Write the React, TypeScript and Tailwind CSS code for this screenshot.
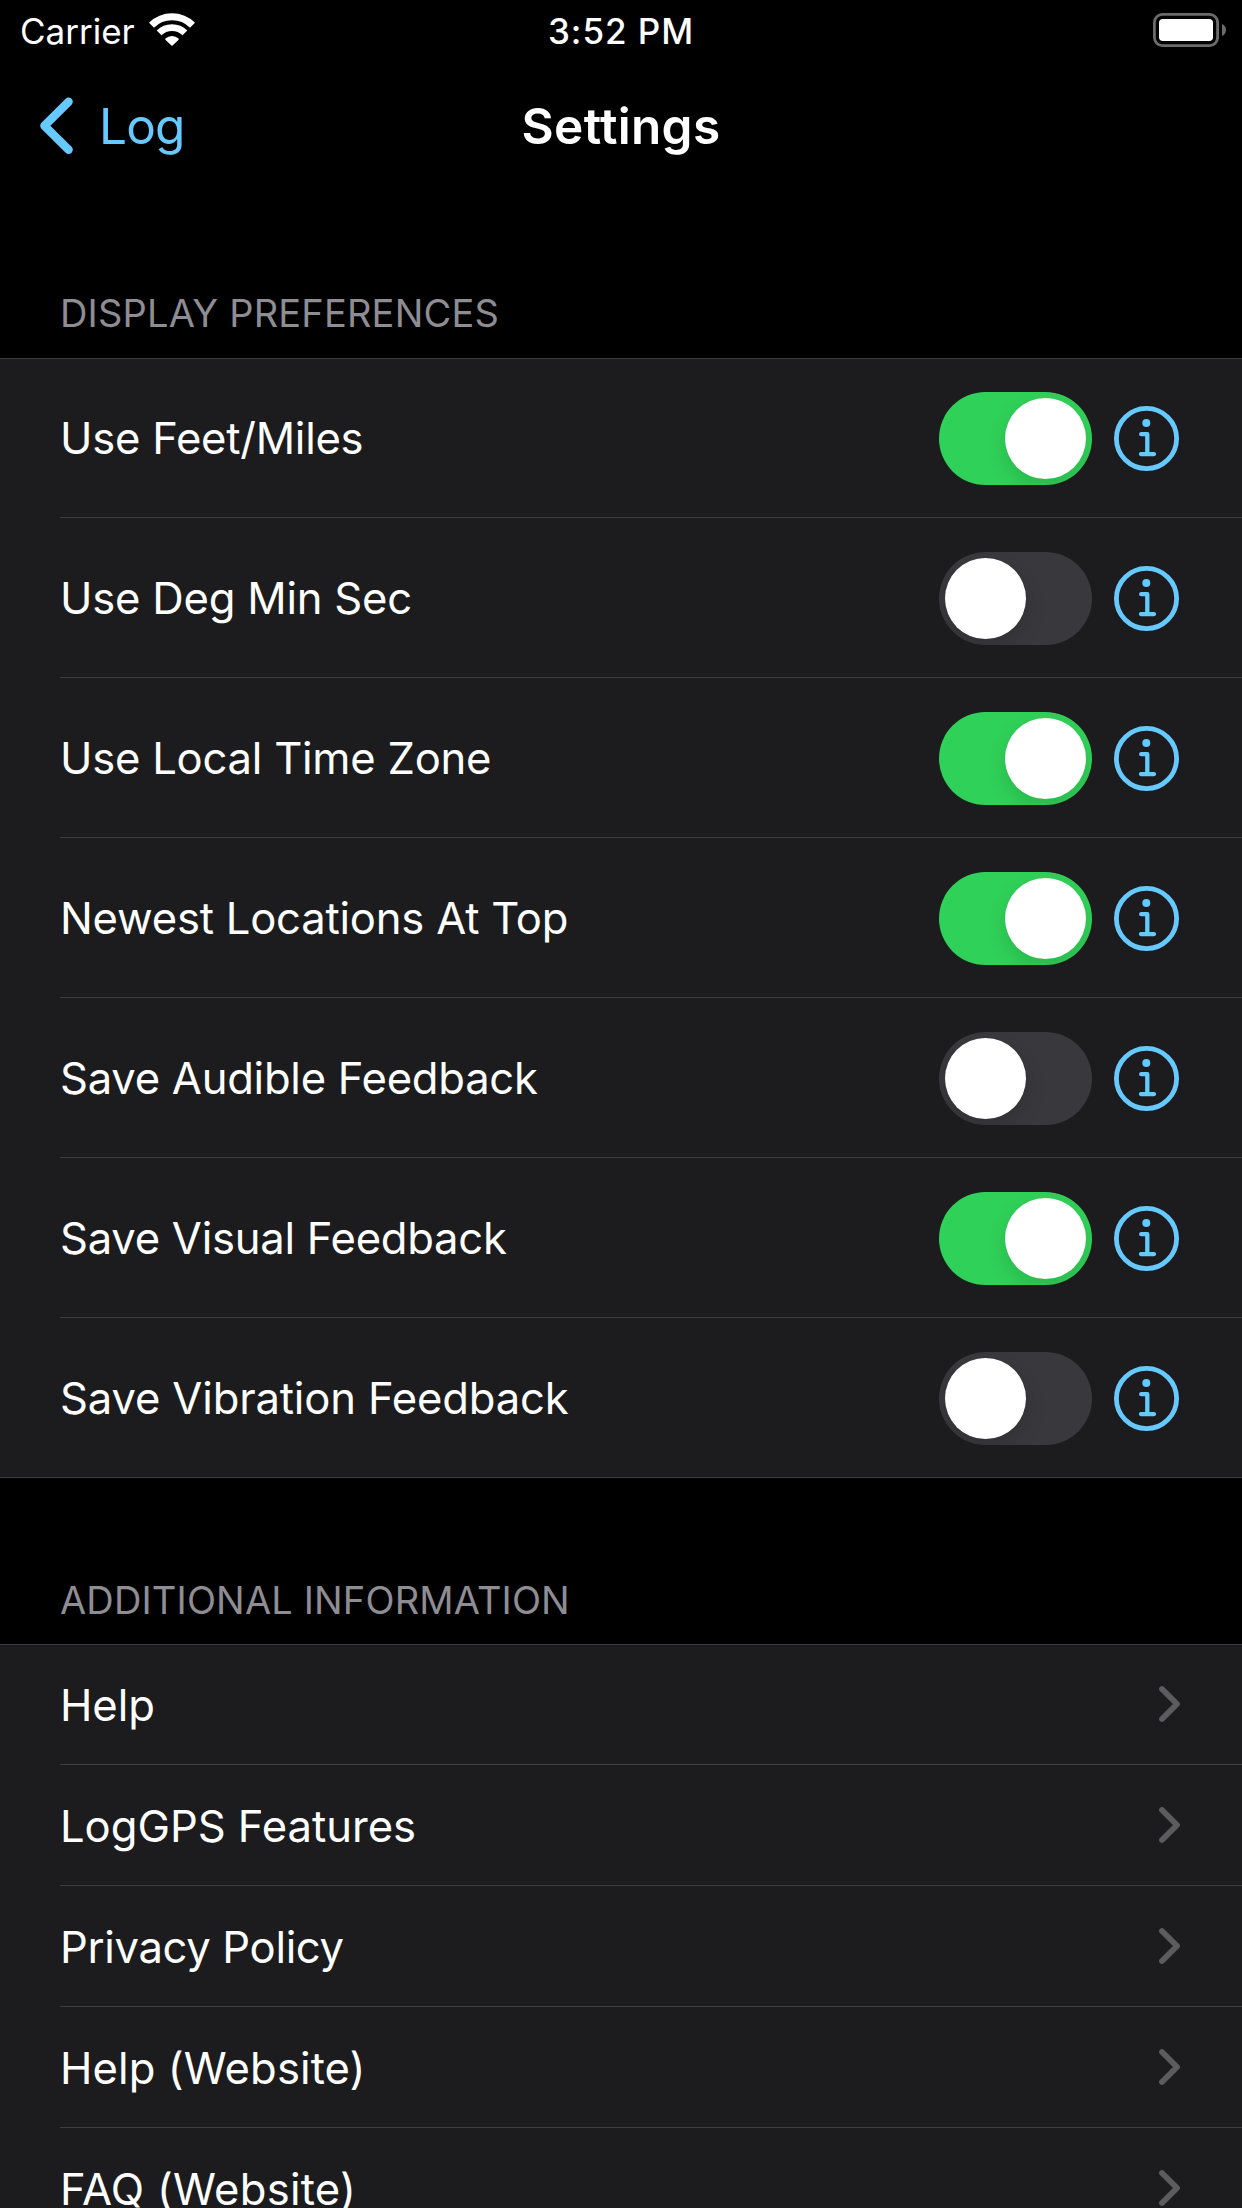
import React, { useState } from "react";

const preferences = [
  { label: "Use Feet/Miles", tracking: "tracking-[-0.25px]", on: true },
  { label: "Use Deg Min Sec", tracking: "tracking-[-0.22px]", on: false },
  { label: "Use Local Time Zone", tracking: "tracking-[-0.24px]", on: true },
  { label: "Newest Locations At Top", tracking: "tracking-[-0.22px]", on: true },
  { label: "Save Audible Feedback", tracking: "tracking-[-0.26px]", on: false },
  { label: "Save Visual Feedback", tracking: "tracking-[-0.26px]", on: true },
  { label: "Save Vibration Feedback", tracking: "tracking-[-0.16px]", on: false },
];

const links = [
  { label: "Help", tracking: "tracking-[-0.05px]" },
  { label: "LogGPS Features", tracking: "tracking-[-0.042px]" },
  { label: "Privacy Policy", tracking: "tracking-[-0.34px]" },
  { label: "Help (Website)", tracking: "tracking-[0.09px]" },
  { label: "FAQ (Website)", tracking: "tracking-[0.247px]" },
];

function WifiIcon() {
  return (
    <svg className="h-[34px] w-[46px]" viewBox="0 0 46 34" fill="none" stroke="#fff">
      <path d="M2.5 12.3A29 29 0 0 1 43.5 12.3" strokeWidth="7" />
      <path d="M10.1 19.9A18.2 18.2 0 0 1 35.9 19.9" strokeWidth="6.8" />
      <path d="M17 26.1A8.8 8.8 0 0 1 29 26.1L23 32Z" fill="#fff" strokeWidth="1.6" strokeLinejoin="round" />
    </svg>
  );
}

function BatteryIcon() {
  return (
    <svg className="h-[34px] w-[73px]" viewBox="0 0 73 34" fill="none">
      <rect x="1.4" y="1.4" width="63.2" height="31.2" rx="8" stroke="#6b6b6b" strokeWidth="2.8" />
      <rect x="6" y="6" width="54" height="22" rx="4" fill="#fff" />
      <path d="M69 11C71.6 12 73 14.4 73 17S71.6 22 69 23Z" fill="#6b6b6b" />
    </svg>
  );
}

function InfoIcon() {
  return (
    <svg className="size-[65px]" viewBox="0 0 65 65" fill="none" stroke="#66c9ff" strokeLinecap="round" strokeLinejoin="round">
      <circle cx="32.5" cy="32.5" r="30.1" strokeWidth="4.8" />
      <circle cx="32.3" cy="17" r="4" fill="#66c9ff" stroke="none" />
      <path d="M27.2 28.2H33.3V48.1M27 48.1H40" strokeWidth="4.3" />
    </svg>
  );
}

function Toggle({ initial, label }: { initial: boolean; label: string }) {
  const [on, setOn] = useState(initial);
  return (
    <button
      type="button"
      role="switch"
      aria-checked={on}
      aria-label={label}
      onClick={() => setOn(!on)}
      className={`flex h-[93px] w-[153px] items-center overflow-hidden rounded-full px-1.5 ${
        on ? "justify-end bg-[#30d158]" : "justify-start bg-[#39383d]"
      }`}
    >
      <span className="size-[81px] rounded-full bg-white shadow-[0_8px_20px_rgba(0,0,0,0.13)]" />
    </button>
  );
}

function SectionTitle({ children, className }: { children: string; className: string }) {
  return <h2 className={`px-[60px] text-[38px] leading-[46px] text-[#8d8d93] ${className}`}>{children}</h2>;
}

export default function App() {
  return (
    <div className="flex h-[2208px] w-[1242px] flex-col overflow-hidden bg-black font-[Inter,sans-serif] text-white">
      <div className="grid h-[60px] shrink-0 grid-cols-3 items-center pt-[2px] text-[35px] leading-[44px]">
        <div className="flex items-center gap-[14px] pl-5">
          <span>Carrier</span>
          <span className="pb-[3px]"><WifiIcon /></span>
        </div>
        <div className="text-center font-medium tracking-[0.95px]">3:52 PM</div>
        <div className="flex justify-end pr-4 pb-[2px]"><BatteryIcon /></div>
      </div>

      <div className="grid h-[132px] shrink-0 grid-cols-3 items-center text-[49.5px] leading-[60px]">
        <a className="flex items-center gap-[26px] pl-[39px] text-[#66c9ff]" href="#log">
          <svg className="h-[58px] w-[34px]" viewBox="0 0 34 58" fill="none" stroke="currentColor" strokeWidth="8.4" strokeLinecap="round" strokeLinejoin="round">
            <path d="M29.6 4.8L5.4 28.8L29.6 52.8" />
          </svg>
          <span className="tracking-[-0.8px]">Log</span>
        </a>
        <h1 className="text-center font-semibold tracking-[0.319px]">Settings</h1>
      </div>

      <SectionTitle className="pt-[98px] pb-[22px] tracking-[0.19px]">DISPLAY PREFERENCES</SectionTitle>
      <ul className="shrink-0 border-y border-[#3d3d40] bg-[#1c1c1e] pl-[60px]">
        {preferences.map((p, i) => (
          <li
            key={p.label}
            className={`flex items-center pr-[63px] ${i === 0 ? "h-[158px] pt-px" : "h-[160px] border-t border-[#3d3d40] pt-[2px]"}`}
          >
            <span className={`flex-1 text-[43.6px] leading-[53px] ${p.tracking}`}>{p.label}</span>
            <Toggle initial={p.on} label={p.label} />
            <button type="button" className="ml-[22px]" aria-label={`About ${p.label}`}>
              <InfoIcon />
            </button>
          </li>
        ))}
      </ul>

      <SectionTitle className="pt-[99px] pb-[21px] tracking-[0.15px]">ADDITIONAL INFORMATION</SectionTitle>
      <ul className="shrink-0 border-t border-[#3d3d40] bg-[#1c1c1e] pl-[60px]">
        {links.map((l, i) => (
          <li
            key={l.label}
            className={`flex items-center pr-[61px] ${i === 0 ? "h-[119px] pt-px" : "h-[121px] border-t border-[#3d3d40] pt-[2px]"}`}
          >
            <span className={`flex-1 text-[43.6px] leading-[53px] ${l.tracking}`}>{l.label}</span>
            <svg className="h-10 w-[22px]" viewBox="0 0 22 40" fill="none" stroke="#5b5b60" strokeWidth="5.8" strokeLinecap="round" strokeLinejoin="round">
              <path d="M3 4L18 19L3 34" />
            </svg>
          </li>
        ))}
      </ul>
    </div>
  );
}
